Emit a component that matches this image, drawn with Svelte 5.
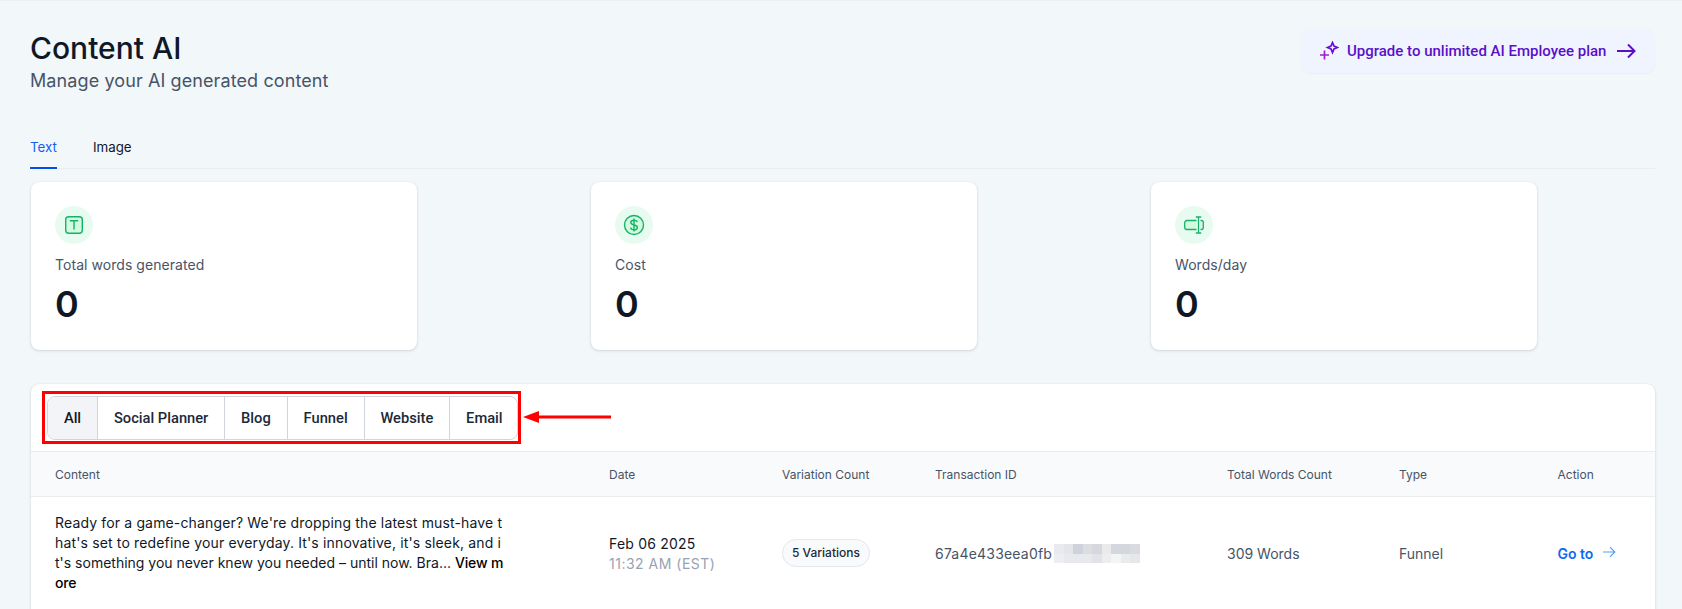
<script>
  const stats = [
    { label: 'Total words generated', icon: 'text' },
    { label: 'Cost', icon: 'cost' },
    { label: 'Words/day', icon: 'cursor' }
  ];
  const filters = ['All', 'Social Planner', 'Blog', 'Funnel', 'Website', 'Email'];
  const mosaic = [
    '#e9e9ee','#e4e5ea','#cfd2dc','#dcdde3','#d6d8df','#eaeaec','#d5d7df','#d5d7df','#d9dbe1',
    '#eceef1','#e8e9ed','#e8e9ed','#e8e9ed','#e2e3e9','#ededf0','#f5f5f6','#eaebed','#e6e7ea'
  ];
</script>

<div class="page">
  <header class="head">
    <div>
      <h1>Content AI</h1>
      <p class="sub">Manage your AI generated content</p>
    </div>
    <button class="upgrade">
      <svg width="19" height="19" viewBox="0 0 19 19" fill="none" stroke-width="1.7">
        <path d="M4.500 9.500v9M0 14h9" stroke="#a21ccc"/>
        <path d="M12.500 1.500l1.500 3.500 3.500 1.500-3.500 1.500-1.500 3.500-1.500-3.500-3.500-1.500 3.500-1.500z" stroke="#6a0fd0"/>
      </svg>
      <span>Upgrade to unlimited AI Employee plan</span>
      <svg width="19" height="16" viewBox="0 0 19 16" fill="none" stroke="#5b0fc8" stroke-width="2"><path d="M0 8h17M11 1.500L17.500 8 11 14.500"/></svg>
    </button>
  </header>

  <nav class="tabs">
    <span class="tab active">Text</span>
    <span class="tab">Image</span>
  </nav>

  <section class="stats">
    {#each stats as s}
      <div class="card">
        <div class="circle">
          {#if s.icon === 'text'}
            <svg width="20" height="20" viewBox="0 0 20 20" fill="none" stroke="#17b26a" stroke-width="1.4">
              <rect x="1.700" y="1.700" width="16.600" height="16.600" rx="3" fill="#d1fadf"/>
              <path d="M5.800 5.800h8.400M10 5.800v8.600"/>
            </svg>
          {:else if s.icon === 'cost'}
            <svg width="22" height="22" viewBox="0 0 22 22" fill="none" stroke="#17b26a" stroke-width="1.4">
              <circle cx="11" cy="11" r="9.500" fill="#d1fadf"/>
              <path d="M14.300 8.200c-.3-1.300-1.700-2-3.300-2-1.800 0-3.200.9-3.200 2.400 0 3.300 6.600 1.600 6.600 4.900 0 1.500-1.500 2.400-3.400 2.400-1.700 0-3.100-.8-3.400-2.200M11 4.500v13"/>
            </svg>
          {:else}
            <svg width="20" height="18" viewBox="0 0 20 18" fill="none" stroke="#17b26a" stroke-width="1.3">
              <path d="M12.500 4.500H3A2.300 2.300 0 0 0 .7 6.800v4.400A2.300 2.300 0 0 0 3 13.500h9.500" fill="#d1fadf"/>
              <path d="M16.500 4.500h.8a2 2 0 0 1 2 2v5a2 2 0 0 1-2 2h-.8" fill="#d1fadf"/>
              <path d="M14.500 1v16M11.800 1h5.400M11.800 17h5.400"/>
            </svg>
          {/if}
        </div>
        <div class="label">{s.label}</div>
        <div class="value">0</div>
      </div>
    {/each}
  </section>

  <section class="panel">
    <div class="toolbar">
      <div class="callout">
        <div class="group">
          {#each filters as f, i}
            <span class="filter" class:on={i === 0}>{f}</span>
          {/each}
        </div>
      </div>
      <svg class="arrow" width="88" height="12" viewBox="0 0 88 12">
        <path d="M0 6l16-6v4.500h72v3H16V12z" fill="#f00"/>
      </svg>
    </div>

    <div class="row header">
      <span class="first">Content</span>
      <span>Date</span>
      <span>Variation Count</span>
      <span>Transaction ID</span>
      <span>Total Words Count</span>
      <span>Type</span>
      <span>Action</span>
    </div>

    <div class="row body">
      <div class="first copy">Ready for a game-changer? We're dropping the latest must-have that's set to redefine your everyday. It's innovative, it's sleek, and i<span class="tight">t's something you never knew you needed – until now. Bra... <b>View more</b></span></div>
      <div class="date">Feb 06 2025<small>11:32 AM (EST)</small></div>
      <div><span class="pill">5 Variations</span></div>
      <div class="muted tx">67a4e433eea0fb<span class="mosaic">{#each mosaic as c}<i style="background:{c}"></i>{/each}</span></div>
      <div class="muted">309 Words</div>
      <div class="muted">Funnel</div>
      <div class="goto">Go to
        <svg width="14" height="12" viewBox="0 0 14 12" fill="none" stroke="#53a1fb" stroke-width="1.200"><path d="M1 6h11.500M8 1.200L12.800 6 8 10.800"/></svg>
      </div>
    </div>
  </section>
</div>

<style>
  :global(body) {
    margin: 0;
    background: #f2f7fa;
    font-family: Inter, "Liberation Sans", sans-serif;
    overflow: hidden;
  }
  .page {
    height: 608px;
    overflow: hidden;
    padding: 0 27px 0 30px;
    border-top: 1px solid #eceff3;
  }
  .head {
    display: flex;
    justify-content: space-between;
    align-items: flex-start;
    padding-top: 27px;
    height: 98px;
  }
  h1 {
    margin: 1px 0 0;
    font-size: 30px;
    line-height: 38px;
    font-weight: 500;
    color: #101828;
  }
  .sub {
    margin: 1px 0 0;
    font-size: 18px;
    line-height: 26px;
    letter-spacing: .1px;
    color: #475467;
  }
  .upgrade {
    display: flex;
    align-items: center;
    width: 354px;
    height: 45px;
    padding: 0 0 0 19px;
    border: 0;
    border-radius: 10px;
    background: #eff4ff;
    box-shadow: 0 1px 2px rgba(16, 24, 40, .04);
    font-family: Roboto, sans-serif;
    font-weight: 500;
    font-size: 15px;
    color: #5b0fc8;
  }
  .upgrade span { margin: 0 11px 0 8px; white-space: nowrap; }
  .tabs {
    display: flex;
    gap: 36px;
    height: 42px;
    border-bottom: 1px solid #eaecf0;
  }
  .tab {
    height: 42px;
    box-sizing: border-box;
    padding-top: 11px;
    font-size: 13.330px;
    line-height: 20px;
    color: #101828;
  }
  .tab.active {
    color: #155eef;
    border-bottom: 2px solid #004eeb;
    height: 43px;
  }
  .stats {
    display: grid;
    grid-template-columns: repeat(3, 386px);
    column-gap: 174px;
    margin: 13px 0 0 1px;
  }
  .card {
    height: 168px;
    box-sizing: border-box;
    padding: 24px;
    background: #fff;
    border-radius: 8px;
    box-shadow: 0 1px 3px rgba(16, 24, 40, .14), 0 0 1px rgba(16, 24, 40, .12);
  }
  .circle {
    width: 38px;
    height: 38px;
    border-radius: 50%;
    background: #e8fbf0;
    display: flex;
    align-items: center;
    justify-content: center;
  }
  .label {
    margin-top: 11px;
    font-size: 14px;
    line-height: 20px;
    letter-spacing: .05px;
    color: #475467;
  }
  .value {
    margin-top: 7px;
    font-size: 36px;
    line-height: 44px;
    font-weight: 600;
    color: #101828;
  }
  .panel {
    margin: 34px 0 0 1px;
    background: #fff;
    border-radius: 8px 8px 0 0;
    box-shadow: 0 1px 3px rgba(16, 24, 40, .14), 0 0 1px rgba(16, 24, 40, .12);
  }
  .toolbar {
    height: 68px;
    display: flex;
    align-items: flex-start;
    padding: 7px 0 0 11px;
    box-sizing: border-box;
    border-bottom: 1px solid #eaecf0;
  }
  .callout {
    border: 3px solid #f00;
    padding: 2px;
    width: 479px;
    height: 53px;
    box-sizing: border-box;
  }
  .group {
    display: flex;
    height: 44px;
    box-sizing: border-box;
    border: 1px solid #d0d5dd;
    border-radius: 8px;
    overflow: hidden;
    width: 471px;
  }
  .filter {
    display: flex;
    align-items: center;
    padding: 0 15.900px;
    white-space: nowrap;
    font-family: Roboto, sans-serif;
    font-weight: 500;
    font-size: 14.700px;
    color: #1d2939;
    border-left: 1px solid #d0d5dd;
  }
  .filter:first-child { border-left: 0; }
  .filter.on { background: #f2f4f7; color: #101828; }
  .arrow { margin: 20px 0 0 2px; }
  .row {
    display: grid;
    grid-template-columns: 554px 173px 153px 292px 172px 158.500px 1fr;
    align-items: center;
    border-bottom: 1px solid #eaecf0;
  }
  .row > * { padding-left: 24px; box-sizing: border-box; }
  .header {
    height: 44px;
    background: #f9fafb;
    font-size: 12px;
    color: #475467;
  }
  .body {
    height: 113px;
    font-size: 14px;
    line-height: 20px;
  }
  .copy {
    width: 473px;
    word-break: break-all;
    letter-spacing: .15px;
    color: #101828;
    margin-top: -1px;
  }
  .tight { letter-spacing: 0; }
  .copy b { font-weight: 500; letter-spacing: -.15px; color: #000; }
  .date { color: #101828; letter-spacing: .2px; }
  .date small { display: block; font-size: 14px; letter-spacing: .5px; color: #98a2b3; }
  .pill {
    display: inline-block;
    height: 28px;
    padding: 0 9px;
    margin-top: -2px;
    line-height: 26px;
    box-sizing: border-box;
    border: 1px solid #e4e7ec;
    border-radius: 14px;
    background: #f9fafb;
    font-size: 12px;
    font-weight: 500;
    color: #1d2939;
  }
  .muted { color: #475467; }
  .tx { display: flex; align-items: center; letter-spacing: .2px; }
  .mosaic {
    display: grid;
    grid-template-columns: repeat(9, 9.500px);
    grid-template-rows: repeat(2, 9.500px);
    margin-left: 2px;
  }
  .mosaic i { display: block; }
  .goto {
    display: flex;
    align-items: center;
    gap: 9px;
    font-weight: 600;
    color: #0b6bf0;
  }
  .goto svg { margin-top: -3px; }
</style>
